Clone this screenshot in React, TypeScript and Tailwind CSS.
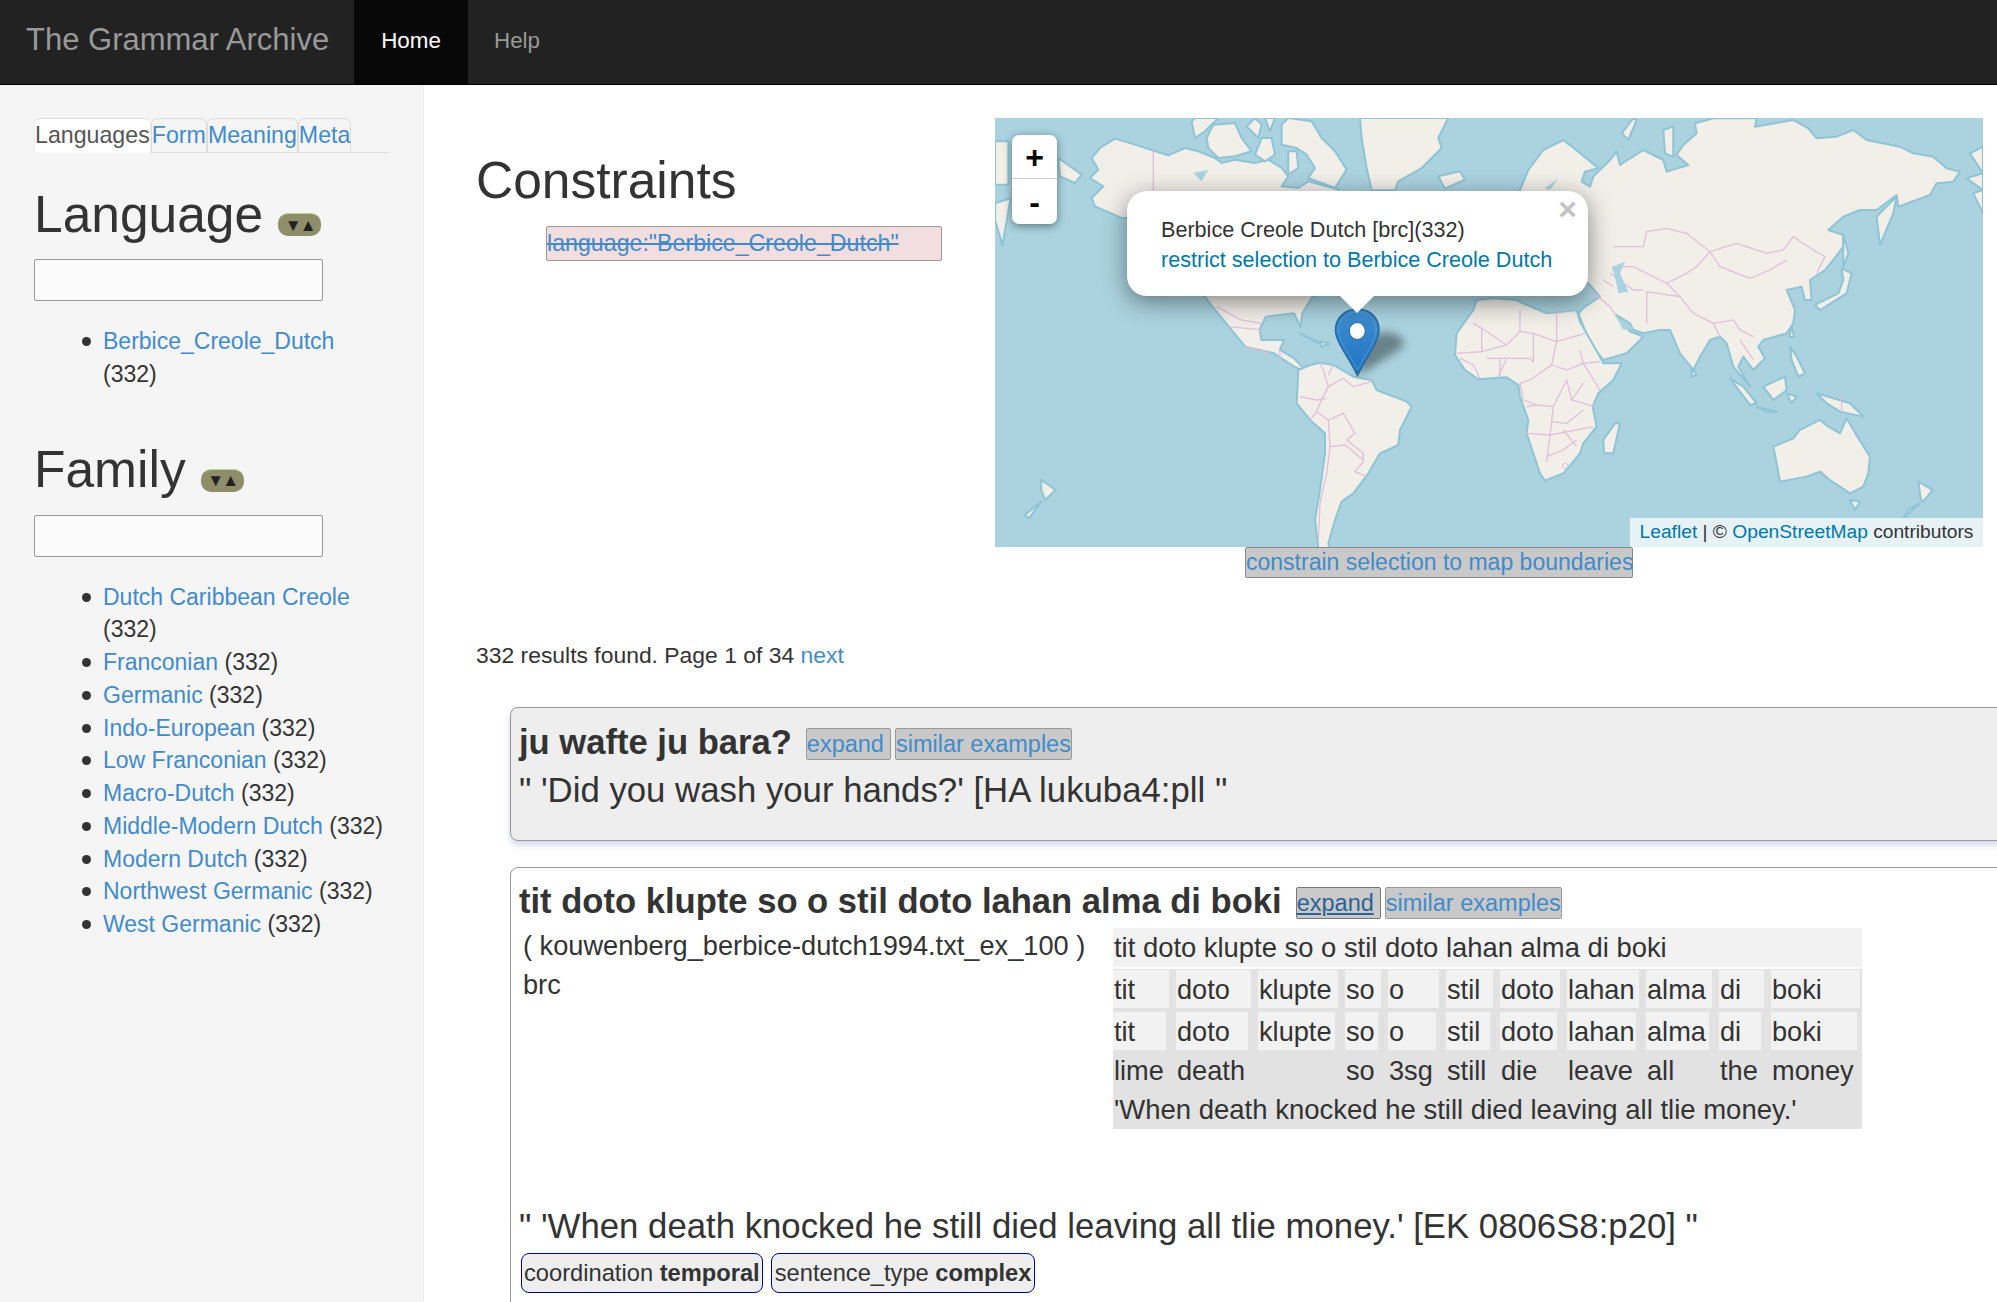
const languages = [{ name: "Berbice_Creole_Dutch", count: 332 }]

const families = [
  "Dutch Caribbean Creole",
  "Franconian",
  "Germanic",
  "Indo-European",
  "Low Franconian",
  "Macro-Dutch",
  "Middle-Modern Dutch",
  "Modern Dutch",
  "Northwest Germanic",
  "West Germanic",
].map((name) => ({ name, count: 332 }))

const glossColumns = [
  ["tit", "tit", "lime"],
  ["doto", "doto", "death"],
  ["klupte", "klupte", ""],
  ["so", "so", "so"],
  ["o", "o", "3sg"],
  ["stil", "stil", "still"],
  ["doto", "doto", "die"],
  ["lahan", "lahan", "leave"],
  ["alma", "alma", "all"],
  ["di", "di", "the"],
  ["boki", "boki", "money"],
]

// land outlines traced by eye from the tiles, each list in its own crop's coordinates
const asiaPacific = [
  // eurasia
  "M60,240 L85,180 L130,120 L190,90 L235,125 L295,175 L255,185 L245,215 L270,230 L280,200 L330,150 L350,125 L360,165 L430,120 L490,150 L500,185 L565,165 L530,135 L550,105 L590,70 L585,40 L640,25 L770,25 L765,50 L880,30 L925,55 L950,85 L1010,80 L1060,60 L1100,90 L1200,110 L1240,130 L1300,140 L1340,175 L1380,185 L1360,215 L1310,220 L1290,255 L1195,290 L1190,255 L1130,300 L1080,300 L1030,320 L985,360 L1030,375 L1030,410 L1000,450 L975,480 L930,510 L935,570 L915,570 L905,530 L860,540 L885,600 L880,640 L860,670 L790,690 L775,710 L795,745 L760,780 L730,740 L715,770 L750,830 L700,770 L680,700 L660,680 L630,690 L600,740 L580,780 L540,730 L510,660 L480,660 L430,670 L400,660 L390,640 L350,615 L390,665 L430,680 L380,730 L310,750 L270,700 L235,610 L255,590 L300,560 L265,520 L60,500 Z",
  // australia, tasmania, new zealand
  "M820,1010 L880,985 L900,960 L960,930 L985,950 L1020,970 L1040,925 L1075,985 L1110,1040 L1105,1090 L1090,1130 L1050,1150 L990,1110 L960,1085 L920,1100 L840,1115 L830,1060 Z",
  "M1050,1170 L1080,1175 L1065,1200 Z",
  "M1255,1115 L1272,1125 L1298,1140 L1270,1175 L1262,1165 L1258,1135 Z",
  "M1260,1180 L1210,1225 L1225,1200 Z",
  // sri lanka, taiwan
  "M575,775 L590,795 L575,800 Z",
  "M875,650 L882,680 L868,682 Z",
  // kamchatka, sakhalin, japan
  "M1130,320 L1190,260 L1180,310 L1140,405 Z",
  "M1030,375 L1045,430 L1030,470 Z",
  "M945,585 L1015,550 L1030,510 L1025,475 L1055,490 L1040,550 L960,600 Z",
  // philippines, sumatra, java, borneo, sulawesi, new guinea
  "M870,710 L890,740 L915,790 L895,800 L875,750 Z",
  "M690,805 L730,830 L770,880 L750,885 Z",
  "M770,890 L830,905 L800,905 Z",
  "M790,830 L855,800 L860,840 L820,870 Z",
  "M860,850 L890,860 L875,880 Z",
  "M950,850 L1050,880 L1090,920 L1020,905 L980,880 Z",
  // arctic russia, far east wrap
  "M365,70 L400,25 L410,30 L385,90 Z",
  "M490,60 L520,50 L520,140 L495,130 Z",
  "M1410,130 L1449,110 L1449,190 Z",
  "M1400,205 L1449,190 L1449,240 Z",
  "M1420,250 L1449,240 L1449,310 Z",
]

const asiaBorders =
  "M340,410 L430,410 L440,365 L500,355 L560,370 L630,425 L710,400 L800,430 L850,420 L880,380 L940,420 L975,440 L950,490 M630,425 L660,470 L750,505 L810,480 L860,450 M630,425 L590,470 L560,490 L500,520 L400,470 L340,470 M500,520 L540,560 L580,610 L640,640 L700,630 L720,660 L760,680 M540,560 L440,545 L440,640 M330,490 L400,540 L430,540 M270,540 L330,590 L350,620 M640,640 L660,680 M720,690 L760,750 M1025,860 L1025,905 M310,510 L340,530"

const arctic = [
  // alaska and canada
  "M290,120 L315,90 L360,62 L420,80 L475,98 L520,112 L570,90 L610,100 L660,120 L680,135 L720,125 L780,135 L820,125 L860,150 L880,175 L860,205 L910,210 L940,190 L1030,215 L1030,300 L380,300 L300,265 L290,240 L325,205 L285,180 L310,155 Z",
  "M190,120 L260,170 L240,195 L195,175 Z",
  "M0,70 L40,70 L40,200 L0,200 Z",
  // archipelago
  "M590,10 L600,0 L670,0 L630,40 L600,60 Z",
  "M635,60 L655,20 L720,15 L740,60 L770,100 L720,115 L670,120 L640,90 Z",
  "M755,25 L780,0 L800,20 L790,60 Z",
  "M810,0 L840,0 L825,40 Z",
  "M800,60 L830,60 L840,110 L810,130 L780,110 Z",
  "M880,100 L905,100 L910,150 L880,170 Z",
  "M860,20 L880,0 L950,10 L980,60 L1020,100 L1055,155 L1020,210 L940,180 L960,150 L935,110 L905,90 L860,80 Z",
  // greenland, iceland
  "M1095,0 L1360,0 L1330,60 L1340,90 L1280,150 L1210,190 L1200,217 L1130,217 L1115,150 L1100,60 Z",
  "M1330,175 L1395,160 L1410,185 L1350,212 Z",
]

const middleAmericaAndPacific = [
  "M400,300 L960,300 L960,420 L850,540 L815,560 L790,610 L785,650 L770,610 L700,620 L685,660 L690,690 L745,690 L735,720 L770,745 L800,785 L770,770 L720,730 L650,710 L610,650 L570,590 L545,550 Z",
  "M37,280 L75,265 L55,405 L37,330 Z",
  "M150,1110 L185,1140 L160,1170 L150,1140 Z",
  "M150,1175 L120,1225 L110,1215 Z",
]

const atlantic = [
  // south america
  "M60,218 L100,225 L160,260 L215,270 L230,300 L320,335 L335,350 L300,420 L295,465 L240,490 L205,550 L160,610 L125,635 L105,690 L85,760 L90,775 L55,775 L45,690 L60,600 L75,490 L75,430 L30,390 L-10,340 L-5,240 L30,225 Z",
  // africa
  "M530,30 L580,25 L650,30 L670,40 L740,70 L830,60 L840,95 L900,200 L910,220 L965,220 L940,270 L895,310 L878,350 L890,410 L850,460 L840,490 L790,550 L735,572 L720,550 L700,490 L680,430 L685,390 L660,320 L655,285 L620,262 L535,268 L495,240 L465,195 L470,130 L520,60 Z",
  // madagascar, cuba, hispaniola
  "M945,400 L960,400 L940,490 L912,490 L910,450 Z",
  "M0,130 L45,155 L85,165 L40,150 Z",
  "M60,155 L85,160 L65,170 Z",
]

const atlanticBorders =
  "M520,100 L545,115 L620,165 L660,125 L700,130 L770,155 L770,60 M660,125 L660,60 M700,130 L700,215 L690,205 L620,205 L595,260 M770,155 L755,225 L690,270 M855,130 L770,155 M840,180 L850,220 L900,215 M755,225 L800,240 L850,220 L900,300 M545,115 L545,185 L470,190 M480,205 L520,225 L540,265 M545,185 L620,165 M560,205 L620,205 M600,205 L600,260 M690,270 L660,280 L670,330 L710,345 L680,350 M710,345 L760,350 L800,270 L815,330 L850,280 M815,330 L885,350 M760,350 L755,395 L800,400 L850,360 M680,430 L750,435 L830,420 L880,410 M750,435 L740,515 M755,395 L750,435 M740,500 L790,480 L830,450 M790,420 L830,470 M60,218 L70,240 L85,290 L130,265 L160,290 L215,275 M85,290 L60,340 L50,365 L85,390 L130,370 L165,430 L140,450 L190,490 L190,515 L165,545 L200,560 M85,390 L90,470 L80,550 L60,640 L55,750 M90,470 L135,465 L190,510 M0,320 L50,330 L80,325 M30,390 L50,365 M100,225 L85,255"

function LandGroup({ transform, shapes, borders }: { transform: string; shapes: string[]; borders?: string }) {
  return (
    <g transform={transform}>
      {shapes.map((d, i) => (
        <path key={i} d={d} fill="#f2efe9" stroke="#8fc4d6" strokeWidth="2" vectorEffect="non-scaling-stroke" strokeLinejoin="round" />
      ))}
      {borders && <path d={borders} fill="none" stroke="#e0bedc" strokeWidth="1.3" vectorEffect="non-scaling-stroke" />}
    </g>
  )
}

function WorldMap() {
  return (
    <div className="relative h-[429px] w-[988px] overflow-hidden bg-[#aad3df]">
      <svg className="absolute inset-0 blur-[0.5px]" width="988" height="429" viewBox="0 0 988 429">
        <LandGroup transform="translate(-15,-8) scale(0.408,0.3333)" shapes={middleAmericaAndPacific} borders="M650,710 L710,730 M735,720 L735,750 M580,590 L640,630 L690,640 M610,650 L690,660" />
        <LandGroup transform="scale(0.3333)" shapes={arctic} borders="M475,98 L475,217" />
        <path transform="scale(0.3333)" d="M595,165 L640,155 L620,190 Z" fill="#aad3df" />
        <LandGroup transform="translate(505,-8) scale(0.3333)" shapes={asiaPacific} borders={asiaBorders} />
        <g transform="translate(505,-8) scale(0.3333)">
          {/* caspian + gulf + baltic */}
          <path d="M335,470 L375,455 L360,490 L385,545 L355,550 L345,500 Z" fill="#aad3df" />
          <path d="M345,615 L400,655 L370,660 Z" fill="#aad3df" />
          <path d="M135,235 L175,205 L150,240 Z" fill="#aad3df" />
        </g>
        <LandGroup transform="translate(305,172) scale(0.3333)" shapes={atlantic} borders={atlanticBorders} />
        <g transform="translate(305,172) scale(0.3333)">
          <circle cx="796" cy="528" r="8" fill="none" stroke="#e0bedc" vectorEffect="non-scaling-stroke" />
          <path d="M670,18 L850,18 L835,60 L740,68 Z" fill="#aad3df" />
        </g>
      </svg>

      {/* zoom buttons */}
      <div className="absolute left-[17px] top-[17px] w-[45px] rounded-[7px] bg-white text-black shadow-[0_2px_8px_rgba(0,0,0,0.45)]">
        <div className="flex h-[44px] items-center justify-center border-b border-[#ccc] text-[32px] font-bold leading-none">+</div>
        <div className="flex h-[45px] items-center justify-center text-[32px] font-bold leading-none">-</div>
      </div>

      {/* marker */}
      <svg className="absolute left-[339px] top-[190px]" width="90" height="72" viewBox="0 0 90 72">
        <defs>
          <linearGradient id="pin" x1="0" y1="0" x2="0" y2="1">
            <stop offset="0" stopColor="#3f8fd0" />
            <stop offset="1" stopColor="#1f72c2" />
          </linearGradient>
        </defs>
        <path d="M24,68 L68,40 Q74,26 50,24 L30,30 Z" fill="#000" opacity="0.38" className="blur-[4px]" />
        <path d="M23.5,1 C10,1 1.5,11 1.5,22 C1.5,34 14,48 23.5,67.5 C33,48 45,34 45,22 C45,11 37,1 23.5,1 Z" fill="url(#pin)" stroke="#2a6a9e" strokeWidth="1.5" />
        <path d="M23.5,4 C12,4 4.5,12 4.5,22 C4.5,33 15,45 23.5,62 C32,45 42,33 42,22 C42,12 35,4 23.5,4 Z" fill="none" stroke="#5aa2da" strokeWidth="1" opacity="0.7" />
        <ellipse cx="23.3" cy="23" rx="8" ry="8.5" fill="#fff" stroke="#2a6496" />
      </svg>

      {/* popup */}
      <div className="absolute left-[132px] top-[73px] h-[105px] w-[461px] rounded-[20px] bg-white pl-[34px] pt-[24px] text-[21.6px] leading-[30px] text-[#333] shadow-[0_6px_24px_rgba(0,0,0,0.45)]">
        <div>Berbice Creole Dutch [brc](332)</div>
        <div className="text-[#0078a8]">restrict selection to Berbice Creole Dutch</div>
        <span className="absolute right-[11px] top-[2px] text-[32px] font-bold leading-[32px] text-[#c3c3c3]">×</span>
      </div>
      <div className="absolute left-[344px] top-[177px] h-0 w-0 border-x-[18px] border-t-[18px] border-x-transparent border-t-white" />

      {/* attribution */}
      <div className="absolute bottom-0 right-0 flex h-[29px] w-[353px] items-center justify-center bg-white/70 text-[19.2px] text-[#333]">
        <span>
          <span className="text-[#0078a8]">Leaflet</span> | © <span className="text-[#0078a8]">OpenStreetMap</span> contributors
        </span>
      </div>
    </div>
  )
}

function FacetList({ items }: { items: { name: string; count: number }[] }) {
  return (
    <ul className="mt-[24px] w-[355px] pl-[69px] text-[23px] leading-[32.75px]">
      {items.map((item) => (
        <li key={item.name} className="relative before:absolute before:left-[-21px] before:top-[12px] before:size-[9px] before:rounded-full before:bg-[#333]">
          <a className="text-[#428bca]">{item.name}</a> ({item.count})
        </li>
      ))}
    </ul>
  )
}

function Facet({ title, items }: { title: string; items: { name: string; count: number }[] }) {
  return (
    <section>
      <div className="flex h-[61px] items-center gap-[15px]">
        <h2 className="text-[51.5px] leading-[56px]">{title}</h2>
        <span className="mt-[22px] flex h-[23px] w-[43px] items-center justify-center rounded-[10px] border-t border-t-[#b5d88c] bg-[#8e8e6a] text-[17px] leading-none tracking-[-2px] text-[#222]">
          ▼▲
        </span>
      </div>
      <div className="mt-[15px] h-[42px] w-[289px] rounded-[2px] border border-[#999] bg-[#fbfbfb]" />
      <FacetList items={items} />
    </section>
  )
}

function SideTabs() {
  const tabs = ["Languages", "Form", "Meaning", "Meta"]
  return (
    <div className="flex h-[35px] w-[355px] border-b border-[#ddd] text-[23.2px] leading-[33px]">
      {tabs.map((tab, i) => (
        <span
          key={tab}
          className={
            i === 0
              ? "h-[35px] rounded-t-[6px] border-x border-t border-x-[#eee] border-t-[#ddd] bg-white text-[#555]"
              : "h-[34px] rounded-t-[6px] border-x border-t border-[#ddd] text-[#428bca]"
          }
        >
          {tab}
        </span>
      ))}
    </div>
  )
}

function ActionButtons({ focused }: { focused?: boolean }) {
  return (
    <span className="ml-[14px] inline-flex gap-[4px] align-[2px] text-[23.5px] font-normal leading-[30px]">
      <a className={focused ? "rounded-[2px] border border-[#777] bg-[#c9c9c9] pr-[6px] text-[#2a6496] underline" : "rounded-[2px] border border-[#999] bg-[#c9c9c9] pr-[6px] text-[#428bca]"}>expand</a>
      <a className="rounded-[2px] border border-[#999] bg-[#c9c9c9] text-[#428bca]">similar examples</a>
    </span>
  )
}

function GlossTable() {
  return (
    <div className="w-[749px] text-[27.4px] leading-[39px] text-[#333]">
      <div className="h-[39px] bg-[#f2f2f2] pl-[1px]">tit doto klupte so o stil doto lahan alma di boki</div>
      <div className="mt-[2px] bg-[#e2e2e2] text-[27.2px]">
        <div className="grid grid-cols-[56px_75px_80px_36px_51px_47px_60px_72px_66px_45px_89px] gap-x-[7px] pt-[1px]">
          {glossColumns.map((col, i) => (
            <div key={i} className="h-[38px] bg-[#f2f2f2] pl-[1px] leading-[40px]">{col[0]}</div>
          ))}
        </div>
        <div className="mt-[4px] grid grid-cols-[53px_72px_77px_33px_48px_44px_57px_69px_63px_42px_86px] gap-x-[10px]">
          {glossColumns.map((col, i) => (
            <div key={i} className="h-[38px] bg-[#f2f2f2] pl-[1px] leading-[40px]">{col[1]}</div>
          ))}
        </div>
        <div className="grid grid-cols-[56px_75px_80px_36px_51px_47px_60px_72px_66px_45px_89px] gap-x-[7px]">
          {glossColumns.map((col, i) => (
            <div key={i} className="h-[40px] whitespace-nowrap pl-[1px] leading-[42px]">{col[2]}</div>
          ))}
        </div>
        <div className="h-[39px] pl-[1px] text-[27.5px]">'When death knocked he still died leaving all tlie money.'</div>
      </div>
    </div>
  )
}

export default function App() {
  return (
    <div className="h-[1302px] w-[1997px] overflow-hidden bg-white font-['Liberation_Sans',sans-serif] text-[#333]">
      <nav className="flex h-[85px] border-b border-black bg-[#222] text-[22.4px] leading-[82px]">
        <span className="w-[354px] pl-[26px] text-[31px] leading-[80px] text-[#999]">The Grammar Archive</span>
        <span className="w-[114px] bg-[#080808] text-center text-white">Home</span>
        <span className="pl-[26px] text-[#999]">Help</span>
      </nav>

      <div className="flex h-[1217px]">
        <aside className="h-full w-[424px] shrink-0 border-r border-[#eee] bg-[#f5f5f5] pl-[34px] pt-[33px]">
          <SideTabs />
          <div className="mt-[30px] flex flex-col gap-[48px]">
            <Facet title="Language" items={languages} />
            <Facet title="Family" items={families} />
          </div>
        </aside>

        <main className="min-w-0 flex-1 pl-[52px] pt-[33px]">
          <div className="flex">
            <div className="w-[519px] shrink-0">
              <h2 className="mt-[34px] text-[51.5px] leading-[56px]">Constraints</h2>
              <div className="ml-[70px] mt-[18px] h-[35px] w-[396px] rounded-[2px] border border-[#999] bg-[#f2dede] text-[23.2px] leading-[33px] text-[#428bca] line-through">
                language:"Berbice_Creole_Dutch"
              </div>
            </div>
            <div>
              <WorldMap />
              <a className="ml-[250px] block h-[31px] w-[388px] whitespace-nowrap rounded-[2px] border border-[#888] bg-[#c9c9c9] text-[23px] leading-[29px] text-[#428bca]">
                constrain selection to map boundaries
              </a>
            </div>
          </div>

          <p className="mt-[61px] text-[22.9px] leading-[33px]">
            332 results found. Page 1 of 34 <a className="text-[#428bca]">next</a>
          </p>

          <div className="ml-[34px] mt-[35px] h-[134px] w-[1600px] rounded-[8px] border border-[#999] bg-[#eee] pl-[8px] pt-[12px] shadow-[0_4px_6px_rgba(120,120,200,0.3)]">
            <div className="text-[34.6px] font-bold leading-[44px]">
              ju wafte ju bara?
              <ActionButtons />
            </div>
            <p className="mt-[3px] text-[34.75px] leading-[46px]">" 'Did you wash your hands?' [HA lukuba4:pll "</p>
          </div>

          <div className="ml-[34px] mt-[26px] h-[600px] w-[1600px] rounded-[8px] border border-[#999] bg-white pl-[8px] pt-[11px]">
            <div className="text-[34.6px] font-bold leading-[44px]">
              tit doto klupte so o stil doto lahan alma di boki
              <ActionButtons focused />
            </div>
            <div className="mt-[5px] flex">
              <div className="-mt-[2px] ml-[4px] w-[590px] shrink-0 text-[27.2px] leading-[39px]">
                <div className="whitespace-nowrap">( kouwenberg_berbice-dutch1994.txt_ex_100 )</div>
                <div>brc</div>
              </div>
              <GlossTable />
            </div>
            <p className="mt-[74px] text-[34.75px] leading-[46px]">
              " 'When death knocked he still died leaving all tlie money.' [EK 0806S8:p20] "
            </p>
            <div className="ml-[2px] mt-[4px] flex gap-[8px] text-[23.7px] leading-[38px]">
              <span className="h-[40px] rounded-[8px] border border-[#00008b] bg-[#eee] px-[2px]">
                coordination <b>temporal</b>
              </span>
              <span className="h-[40px] rounded-[8px] border border-[#00008b] bg-[#eee] px-[3px]">
                sentence_type <b>complex</b>
              </span>
            </div>
          </div>
        </main>
      </div>
    </div>
  )
}
